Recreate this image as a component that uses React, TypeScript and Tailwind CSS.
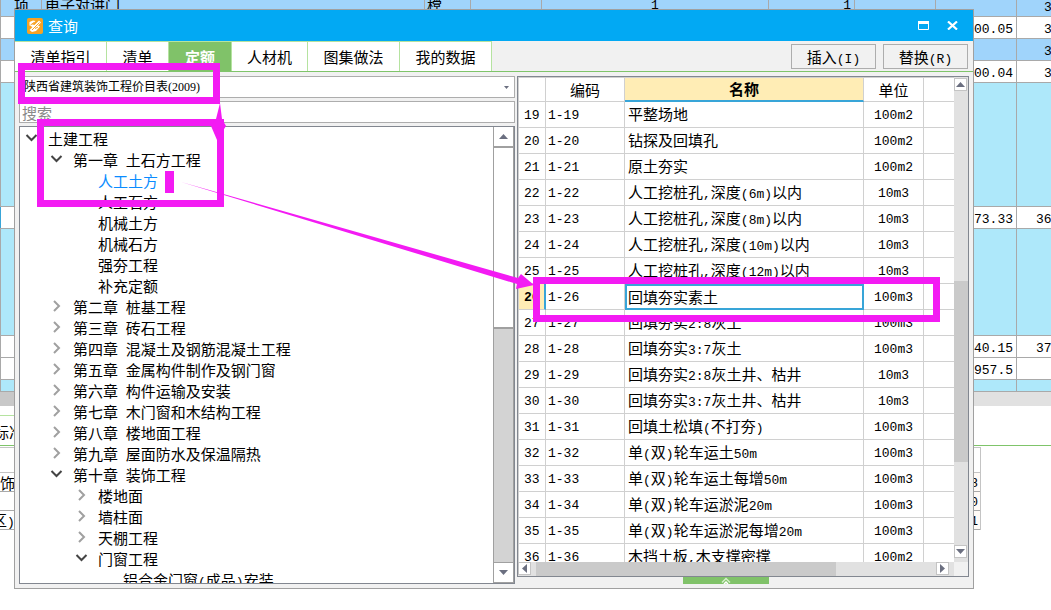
import React from "react";

const cjk = "font-['Noto_Sans_CJK_SC',sans-serif]";
const mono = "font-['Liberation_Mono',monospace] text-[13px]";

function Mixed({ text }: { text: string }) {
  return (
    <>
      {text.split(/([\x20-\x7e]+)/).map((part, i) =>
        /^[\x20-\x7e]+$/.test(part) ? (
          <span key={i} className={`${mono} whitespace-pre leading-none`}>{part}</span>
        ) : (
          part
        ),
      )}
    </>
  );
}

type Tone = "blue" | "white" | "cyan";
const toneClass: Record<Tone, string> = {
  blue: "bg-[#a0d4fb]",
  white: "bg-white",
  cyan: "bg-[#aee8fa]",
};

const sheetRows: { tone: Tone; h: string; a?: string; b?: string; current?: boolean }[] = [
  { tone: "blue", h: "h-[22px]", b: "3" },
  { tone: "white", h: "h-[22px]", a: "00.05", b: "3" },
  { tone: "blue", h: "h-[22px]", b: "3" },
  { tone: "white", h: "h-[22px]", a: "00.04", b: "3" },
  { tone: "cyan", h: "h-[124px]" },
  { tone: "white", h: "h-[22px]", a: "73.33", b: "36", current: true },
  { tone: "cyan", h: "h-[107px]" },
  { tone: "white", h: "h-[22px]", a: "40.15", b: "37" },
  { tone: "white", h: "h-[22px]", a: "957.5" },
  { tone: "cyan", h: "h-[12px]" },
];

function Sheet() {
  return (
    <div className="h-full overflow-hidden bg-white text-black">
      <div className="-mt-[5px]">
        {sheetRows.map((row, i) => (
          <div key={i} className={`flex border-b border-[#a9a9a9] leading-5 ${row.h} ${toneClass[row.tone]}`}>
            <div className={`w-px ${row.current ? "bg-[#38a5d8]" : "bg-[#a9a9a9]"}`} />
            {i === 0 ? (
              <div className="flex min-w-0 flex-1">
                <div className="w-[41px] border-r border-[#a9a9a9] pl-[13px]">项</div>
                <div className="w-[383px] border-r border-[#a9a9a9] pl-[3px]">电子对讲门</div>
                <div className="w-[46px] border-r border-[#a9a9a9] pl-[2px]">樘</div>
                <div className="w-[71px] border-r border-[#a9a9a9]" />
                <div className={`w-[227px] border-r border-[#a9a9a9] text-center ${mono} leading-[22px]`}>1</div>
                <div className={`w-[86px] border-r border-[#a9a9a9] pr-[3px] text-right ${mono} leading-[22px]`}>1</div>
                <div className="w-[81px] border-r border-[#a9a9a9]" />
                <div className="flex-1" />
              </div>
            ) : (
              <div className="flex-1" />
            )}
            <div className={`w-[81px] border-r border-[#a9a9a9] pr-[3px] text-right ${mono} leading-[26px]`}>{row.a}</div>
            <div className={`w-[34px] overflow-hidden ${mono} leading-[26px] ${row.b && row.b.length > 1 ? "pl-[19px]" : "pl-[27px]"}`}>
              {row.b}
            </div>
          </div>
        ))}
      </div>
      <div className="flex h-[14px]">
        <div className="w-[14px] bg-[#c8c8c8]" />
        <div className="flex-1 bg-[#e1e1e1]" />
      </div>
      <div className="flex">
        <div className="w-[500px] pt-[9px]">
          <div className="h-[31px] overflow-hidden border-y border-t-[#b5e3a0] border-b-[#7fc46a] leading-[32px]">
            <span className="-ml-[6px]">标准</span>
          </div>
          <div className="mt-px h-[26px] border-y border-[#c4c4c4]" />
          <div className="h-[19px] overflow-hidden border-b border-[#a9a9a9] leading-5">饰)</div>
          <div className="h-[19px] border-b border-[#a9a9a9]" />
          <div className="h-[19px] overflow-hidden border-b border-[#a9a9a9] leading-[18px]">
            <span className="-ml-[8px]">区</span>
            <span className={mono}>)</span>
          </div>
        </div>
        <div className="flex-1 pt-[39px]">
          <div className="h-px bg-[#7fc46a]" />
          <div className={`mt-px w-[481px] border-r border-t border-[#c4c4c4] text-right ${mono}`}>
            <div className="h-[25px] border-b border-[#c4c4c4]" />
            {["8", "0", "1"].map((n) => (
              <div key={n} className="h-[19px] border-b border-[#a9a9a9] bg-[#fffaf6] pr-[2px] leading-[22px]">
                {n}
              </div>
            ))}
          </div>
        </div>
      </div>
    </div>
  );
}

const tabs = [
  { label: "清单指引", w: "w-[92px]" },
  { label: "清单", w: "w-[62px]" },
  { label: "定额", w: "w-[63px]", active: true },
  { label: "人材机", w: "w-[76px]" },
  { label: "图集做法", w: "w-[92px]" },
  { label: "我的数据", w: "w-[92px]" },
];

type Node = { level: 0 | 1 | 2 | 3; label: string; state?: "open" | "closed"; selected?: boolean };
const tree: Node[] = [
  { level: 0, label: "土建工程", state: "open" },
  { level: 1, label: "第一章 土石方工程", state: "open" },
  { level: 2, label: "人工土方", selected: true },
  { level: 2, label: "人工石方" },
  { level: 2, label: "机械土方" },
  { level: 2, label: "机械石方" },
  { level: 2, label: "强夯工程" },
  { level: 2, label: "补充定额" },
  { level: 1, label: "第二章 桩基工程", state: "closed" },
  { level: 1, label: "第三章 砖石工程", state: "closed" },
  { level: 1, label: "第四章 混凝土及钢筋混凝土工程", state: "closed" },
  { level: 1, label: "第五章 金属构件制作及钢门窗", state: "closed" },
  { level: 1, label: "第六章 构件运输及安装", state: "closed" },
  { level: 1, label: "第七章 木门窗和木结构工程", state: "closed" },
  { level: 1, label: "第八章 楼地面工程", state: "closed" },
  { level: 1, label: "第九章 屋面防水及保温隔热", state: "closed" },
  { level: 1, label: "第十章 装饰工程", state: "open" },
  { level: 2, label: "楼地面", state: "closed" },
  { level: 2, label: "墙柱面", state: "closed" },
  { level: 2, label: "天棚工程", state: "closed" },
  { level: 2, label: "门窗工程", state: "open" },
  { level: 3, label: "铝合金门窗(成品)安装" },
];
const indent = ["pl-[5px]", "pl-[30px]", "pl-[55px]", "pl-[80px]"];

function Chevron({ state }: { state?: "open" | "closed" }) {
  return (
    <svg viewBox="0 0 13 13" className="mr-[10px] h-[13px] w-[13px] shrink-0" fill="none" strokeWidth="2" aria-hidden="true">
      {state === "open" && <path d="M1.5 3 6.5 8 11.5 3" stroke="#444" />}
      {state === "closed" && <path d="M4 1 9 6 4 11" stroke="#a0a0a0" />}
    </svg>
  );
}

const items: [number, string, string][] = [
  [19, "平整场地", "100m2"],
  [20, "钻探及回填孔", "100m2"],
  [21, "原土夯实", "100m2"],
  [22, "人工挖桩孔,深度(6m)以内", "10m3"],
  [23, "人工挖桩孔,深度(8m)以内", "10m3"],
  [24, "人工挖桩孔,深度(10m)以内", "10m3"],
  [25, "人工挖桩孔,深度(12m)以内", "10m3"],
  [26, "回填夯实素土", "100m3"],
  [27, "回填夯实2:8灰土", "100m3"],
  [28, "回填夯实3:7灰土", "100m3"],
  [29, "回填夯实2:8灰土井、枯井", "10m3"],
  [30, "回填夯实3:7灰土井、枯井", "10m3"],
  [31, "回填土松填(不打夯)", "100m3"],
  [32, "单(双)轮车运土50m", "100m3"],
  [33, "单(双)轮车运土每增50m", "100m3"],
  [34, "单(双)轮车运淤泥20m", "100m3"],
  [35, "单(双)轮车运淤泥每增20m", "100m3"],
  [36, "木挡土板,木支撑密撑", "100m2"],
];

const arrows = { up: "M0 5 4.5 0 9 5z", down: "M0 0H9L4.5 5z", left: "M5 0V9L0 4.5z", right: "M0 0V9L5 4.5z" };
function Arrow({ dir }: { dir: keyof typeof arrows }) {
  const tall = dir === "left" || dir === "right";
  return (
    <svg viewBox={tall ? "0 0 5 9" : "0 0 9 5"} className={tall ? "h-[9px] w-[5px]" : "h-[5px] w-[9px]"} fill="#6b6f80" aria-hidden="true">
      <path d={arrows[dir]} />
    </svg>
  );
}

function ItemTable() {
  const base = "overflow-hidden whitespace-nowrap border-b border-b-[#d0d0d0] p-0";
  const cell = `${base} border-r border-r-[#d0d0d0]`;
  const line = "pt-[2px] leading-[23px]";
  return (
    <table className="w-full table-fixed border-separate border-spacing-0 border-l border-t border-[#d0d0d0]">
      <colgroup>
        <col className="w-[27px]" />
        <col className="w-[79px]" />
        <col />
        <col className="w-[60px]" />
        <col className="w-[30px]" />
      </colgroup>
      <thead>
        <tr className="h-[24px] leading-[22px]">
          <th className={cell} />
          <th className={`${cell} font-normal`}>编码</th>
          <th className="border-b-2 border-r border-b-[#38a5d8] border-r-[#d0d0d0] bg-[#ffedb5] p-0 font-bold">名称</th>
          <th className={`${cell} font-normal`}>单位</th>
          <th className="border-b border-[#d0d0d0]" />
        </tr>
      </thead>
      <tbody>
        {items.map(([n, name, unit]) => {
          const on = n === 26;
          return (
            <tr key={n} className="h-[26px] leading-6">
              <td className={`${mono} ${on ? `${base} border-r-2 border-r-[#38a5d8] bg-[#ffedb5] font-bold` : cell}`}>
                <div className={`pl-[5px] ${line}`}>{n}</div>
              </td>
              <td className={`${cell} ${mono}`}>
                <div className={`pl-[2px] ${line}`}>{`1-${n}`}</div>
              </td>
              <td className={on ? "border-2 border-[#38a5d8] p-0 pl-px leading-[22px]" : cell}>
                <div className={on ? "h-[22px]" : "h-[25px] pl-[3px]"}>
                  <Mixed text={name} />
                </div>
              </td>
              <td className={`${cell} ${mono} text-center`}>
                <div className={line}>{unit}</div>
              </td>
              <td className="border-b border-[#d0d0d0]" />
            </tr>
          );
        })}
      </tbody>
    </table>
  );
}

function QueryWindow() {
  const smallButton = "flex h-[13px] w-[13px] shrink-0 items-center justify-center border border-[#c4c4c4] bg-white";
  const bigButton = "flex h-[21px] shrink-0 items-center justify-center border-[#a0a0a0] bg-white";
  return (
    <section aria-label="查询" className="absolute bottom-[21px] left-[14px] right-[77px] top-[9px] flex flex-col border border-[#a0a0a0] bg-[#f1f1f1]">
      <header className="flex h-[31px] shrink-0 items-center bg-[#02a9f3] pl-3 pr-[15px] text-white">
        <svg viewBox="0 0 16 16" className="h-4 w-4" aria-hidden="true">
          <rect width="16" height="16" rx="2" fill="#f7a224" />
          <path d="M2.500 4 6 2.500 8.500 3 5 6.500 7.500 7 12 2.500 14 4.500 11 7.500 13 8.500 9 13 5 14 2.500 12 5.500 9 2.500 7.500z" fill="#fff" />
          <path d="M5 12 12.500 4.500M7 4.500 3.500 7M8 10.500 11 9" stroke="#f7a224" />
        </svg>
        <h1 className="ml-[5px] flex-1 text-[15px] leading-[31px]">查询</h1>
        <button type="button" aria-label="最大化" className="mr-[18px]">
          <svg viewBox="0 0 11 9" className="h-[9px] w-[11px]"><path d="M.5 2V8.500H10.500V2" fill="none" stroke="#fff" /><path d="M0 0H11V3H0z" fill="#fff" /></svg>
        </button>
        <button type="button" aria-label="关闭">
          <svg viewBox="0 0 11 9" className="h-[9px] w-[11px]"><path d="M1 .5 10 8.500M10 .5 1 8.500" stroke="#fff" strokeWidth="2.200" /></svg>
        </button>
      </header>

      <div className="flex h-[31px] shrink-0 border-b border-[#7fc46a]">
        <div role="tablist" className="flex border-t border-[#b5e3a0]">
          {tabs.map((t) => (
            <button
              key={t.label}
              type="button"
              role="tab"
              aria-selected={!!t.active}
              className={`${t.w} border-r border-[#b5e3a0] pt-px leading-6 ${t.active ? "bg-[#80c269] font-bold text-white" : "bg-white text-black"}`}
            >
              {t.label}
            </button>
          ))}
        </div>
        <div className="ml-auto flex items-start gap-[7px] pr-[5px] pt-[3px]">
          {["插入(I)", "替换(R)"].map((b) => (
            <button key={b} type="button" className="h-[25px] w-[85px] border border-[#adadad] bg-[#f1f1f1] leading-[22px]">
              <Mixed text={b} />
            </button>
          ))}
        </div>
      </div>

      <div className="flex min-h-0 flex-1 gap-[2px] pl-1 pr-1 pt-1">
        <div className="mb-1 flex min-w-0 flex-[496] flex-col gap-[3px]">
          <div className="relative flex h-[22px] shrink-0">
            <select aria-label="定额库" className="w-full appearance-none border border-[#adadad] bg-white pl-1 font-['Liberation_Serif','Noto_Sans_CJK_SC',serif] text-[12px] leading-5 text-black">
              <option>陕西省建筑装饰工程价目表(2009)</option>
            </select>
            <svg viewBox="0 0 5 3" className="pointer-events-none absolute right-[6px] top-[10px] h-[3px] w-[5px]" fill="#6b6f80" aria-hidden="true"><path d="M0 0H5L2.500 3z" /></svg>
          </div>
          <input aria-label="搜索" placeholder="搜索" className="h-[22px] shrink-0 border border-[#adadad] bg-white pl-[2px] leading-5 placeholder:text-[#8a8a8a]" />
          <div className="flex min-h-0 flex-1 border border-[#828790] bg-white">
            <ul className="min-w-0 flex-1 overflow-hidden pt-px">
              {tree.map((n) => (
                <li key={n.label} className={`flex h-[21px] items-center whitespace-nowrap leading-[21px] ${indent[n.level]} ${n.selected ? "text-[#0a8cff]" : ""}`}>
                  <Chevron state={n.state} />
                  <span><Mixed text={n.label} /></span>
                </li>
              ))}
            </ul>
            <div className="flex w-[21px] flex-col border-x border-[#a0a0a0] bg-[#d3d3d3]">
              <div className={`${bigButton} border-b-2`}><Arrow dir="up" /></div>
              <div className="flex-[180] border-b-2 border-[#a0a0a0] bg-white" />
              <div className="flex-[234]" />
              <div className={`${bigButton} border-y`}><Arrow dir="down" /></div>
            </div>
          </div>
        </div>

        <div className="flex min-w-0 flex-[452] flex-col">
          <div className="flex min-h-0 flex-1 flex-col border border-[#828790] bg-white">
            <div className="flex min-h-0 flex-1">
              <div className="min-w-0 flex-1 overflow-hidden"><ItemTable /></div>
              <div className="flex w-[14px] flex-col bg-[#e1e1e1] pt-px">
                <div className={smallButton}><Arrow dir="up" /></div>
                <div className="flex-[190]" />
                <div className="flex-[180] bg-[#cacaca]" />
                <div className="flex-[83]" />
                <div className={`${smallButton} mb-1`}><Arrow dir="down" /></div>
              </div>
            </div>
            <div className="flex h-[14px] shrink-0 bg-[#e1e1e1]">
              <div className={smallButton}><Arrow dir="left" /></div>
              <div className="ml-[5px] flex-[300] bg-[#cacaca]" />
              <div className="flex-[100]" />
              <div className={`${smallButton} mr-[5px]`}><Arrow dir="right" /></div>
              <div className="w-[14px] bg-[#f1f1f1]" />
            </div>
          </div>
          <div className="mb-[4px] flex h-[7px] shrink-0 pl-[166px]">
            <button type="button" aria-label="展开" className="flex w-[86px] justify-center bg-[#80c269]">
              <svg viewBox="0 0 10 7" className="h-[7px] w-[10px]" fill="none" strokeWidth="1.500"><path d="M1 5.500 5 1.500 9 5.500" stroke="#d5f0cb" /><path d="M3 7 5 5 7 7" stroke="#fff" /></svg>
            </button>
          </div>
        </div>
      </div>
    </section>
  );
}

function Annotations() {
  return (
    <svg className="pointer-events-none absolute left-0 top-0 h-[610px] w-[1051px]" viewBox="0 0 1051 610" fill="none" aria-hidden="true">
      <g stroke="#f31bf3" strokeWidth="7">
        <rect x="21.500" y="66.500" width="195" height="34" />
        <rect x="40.500" y="122.500" width="180" height="81" />
        <rect x="536.500" y="280.500" width="400" height="38" />
      </g>
      <g fill="#f31bf3">
        <rect x="165" y="171" width="9" height="22" />
        <path d="M220 103 222 119 226 126 217 140 211 126 216 119z" />
        <path d="M181 182 518 278 521 274 534 285 516 289 517 284z" />
      </g>
    </svg>
  );
}

export default function App() {
  return (
    <main className={`relative h-screen min-h-[400px] overflow-hidden text-[15px] ${cjk}`}>
      <Sheet />
      <QueryWindow />
      <Annotations />
    </main>
  );
}
